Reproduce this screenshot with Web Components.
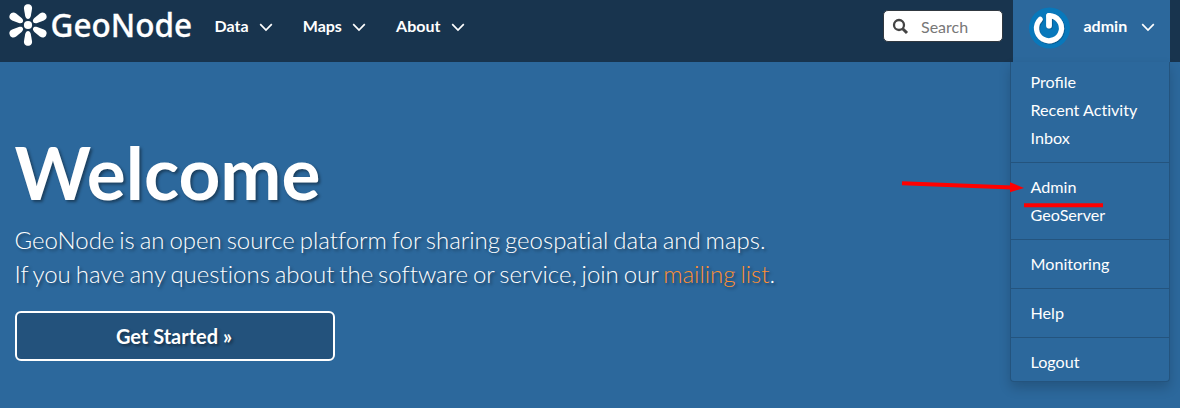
<!DOCTYPE html>
<html lang="en">
<head>
<meta charset="utf-8">
<title>GeoNode</title>
<style>
  html, body { margin: 0; height: 408px; overflow: hidden; }
  body { font-family: Lato, "Liberation Sans", sans-serif; font-size: 16px; color: #fff; background: #2c689c; position: relative; }
</style>
</head>
<body>
<geo-header>
  <geo-logo></geo-logo>
  <nav-item>Data</nav-item>
  <nav-item>Maps</nav-item>
  <nav-item>About</nav-item>
  <search-box slot="end"></search-box>
  <user-menu slot="end">
    <menu-group><menu-entry>Profile</menu-entry><menu-entry class="plain">Recent Activity</menu-entry><menu-entry>Inbox</menu-entry></menu-group>
    <menu-group><menu-entry>Admin</menu-entry><menu-entry>GeoServer</menu-entry></menu-group>
    <menu-group><menu-entry>Monitoring</menu-entry></menu-group>
    <menu-group><menu-entry>Help</menu-entry></menu-group>
    <menu-group><menu-entry>Logout</menu-entry></menu-group>
  </user-menu>
</geo-header>
<welcome-hero></welcome-hero>
<arrow-note></arrow-note>
<script>
const define = (name, html) => customElements.define(name, class extends HTMLElement {
  constructor() {
    super();
    const t = document.createElement('template');
    t.innerHTML = html;
    this.attachShadow({ mode: 'open' }).append(t.content.cloneNode(true));
  }
});
const chevron = '<svg width="14" height="9" viewBox="0 0 14 9"><path d="M1.2 1.2 7 7 12.8 1.2" fill="none" stroke="#fff" stroke-width="1.7"/></svg>';

define('geo-header', `
  <style>
    :host { display: flex; justify-content: space-between; height: 62px; background: #18344e; }
    .side { display: flex; align-items: flex-start; }
    .end { padding-right: 10px; }
  </style>
  <div class="side"><slot></slot></div>
  <div class="side end"><slot name="end"></slot></div>`);

define('geo-logo', `
  <style>:host { display: block; width: 199.5px; height: 50px; } svg { display: block; }
    text { font-family: "Noto Sans", "Open Sans", sans-serif; font-weight: 500; font-size: 33px; fill: #fff; stroke: #fff; stroke-width: .3px; }</style>
  <svg width="199" height="50" viewBox="0 0 199 50">
    <defs><path id="petal" d="M28 19C26.700 19 25.700 18 25.200 16L24 9C23.600 6 25.300 4.200 28 4.200S32.400 6 32 9L30.800 16C30.300 18 29.300 19 28 19Z"/></defs>
    <g fill="#fff">
      <circle cx="28" cy="25" r="4.100"/>
      <use href="#petal"/><use href="#petal" transform="rotate(60 28 25)"/><use href="#petal" transform="rotate(120 28 25)"/>
      <use href="#petal" transform="rotate(180 28 25)"/><use href="#petal" transform="rotate(240 28 25)"/><use href="#petal" transform="rotate(300 28 25)"/>
    </g>
    <text x="50.500" y="37" textLength="141.500" lengthAdjust="spacingAndGlyphs">GeoNode</text>
  </svg>`);

define('nav-item', `
  <style>:host { display: flex; align-items: center; gap: 10.200px; height: 51px; padding: 0 15px; font-weight: 700; }
  svg { display: block; margin-top: 3px; }</style>
  <slot></slot>${chevron}`);

define('search-box', `
  <style>:host { display: flex; align-items: center; box-sizing: border-box; width: 120px; height: 32px; margin: 10px 10px 0 0; padding-left: 8px; gap: 12px;
    background: #fff; border: 1px solid #303840; border-radius: 5px; color: #777; }
    svg { margin-top: 1px; }</style>
  <svg width="17" height="17" viewBox="0 0 17 17"><g fill="none" stroke="#444"><circle cx="7" cy="7" r="5" stroke-width="2.300"/><path d="M10.700 10.700 15 15" stroke-width="3"/></g></svg>
  <span>Search</span>`);

define('user-menu', `
  <style>
    :host { display: block; position: relative; width: 157px; }
    .toggle { display: flex; align-items: flex-start; box-sizing: border-box; height: 62px; padding: 7px 15px 0 16px; background: #2c689c; font-weight: 700; }
    .name { flex: 1; margin-left: 12.500px; line-height: 38px; }
    .toggle > svg { display: block; }
    .toggle > svg:last-child { margin-top: 15.500px; }
    .menu { position: absolute; top: 62px; right: 0; box-sizing: border-box; width: 160px; padding: 6px 0 5px; background: #2c689c;
      border: 1px solid #24547e; border-top: 0; border-radius: 0 0 4px 4px; box-shadow: 0 6px 12px rgba(0,0,0,.175); }
  </style>
  <div class="toggle">
    <svg width="42" height="42" viewBox="0 0 42 42">
      <defs><filter id="sh" x="-30%" y="-30%" width="160%" height="160%"><feDropShadow dx=".7" dy=".8" stdDeviation=".6" flood-color="#053a66" flood-opacity=".6"/></filter></defs>
      <circle cx="20.500" cy="21" r="20.500" fill="#0878bb"/>
      <g fill="none" stroke="#fff" stroke-linecap="round" filter="url(#sh)"><path d="M11.200 12.300A12.500 12.500 0 1 0 20 8.700" stroke-width="5.200"/><path d="M20 9V18.500" stroke-width="5.800"/></g>
    </svg>
    <span class="name">admin</span>${chevron}
  </div>
  <div class="menu"><slot></slot></div>`);

define('menu-group', `
  <style>:host { display: block; } :host(:not(:first-child)) { margin-top: 10px; border-top: 1px solid #24547e; padding-top: 10px; }</style><slot></slot>`);
define('menu-entry', `
  <style>:host { display: block; height: 28px; line-height: 28px; padding: 0 19.500px; font-size: 16.150px; white-space: nowrap; } :host(.plain) { font-variant-ligatures: none; }</style><slot></slot>`);

define('welcome-hero', `
  <style>
    :host { display: block; padding: 67px 15px 0; text-shadow: 2px 2px 3px rgba(0,0,0,.4); }
    h1 { margin: 0 0 0 -.5px; font-size: 73px; line-height: 86px; font-weight: 700; }
    p { margin: 8px 0 20px -.5px; font-size: 24px; line-height: 34px; font-weight: 300; white-space: nowrap; font-variant-ligatures: none; word-spacing: -1.620px; }
    a { color: #ff8f31; text-decoration: none; }
    .button { box-sizing: border-box; width: 320px; height: 50px; line-height: 47px; padding-right: 2px; border: 2px solid #fff; border-radius: 6px; background: #23527c; text-align: center; font-size: 20px; font-weight: 700; }
  </style>
  <h1>Welcome</h1>
  <p>GeoNode is an open source platform for sharing geospatial data and maps.<br>If you have any questions about the software or service, join our <a>mailing list</a>.</p>
  <div class="button">Get Started »</div>`);

define('arrow-note', `
  <style>:host { display: block; position: absolute; left: 895px; top: 175px; width: 215px; height: 40px; pointer-events: none; } svg { display: block; }</style>
  <svg width="215" height="40" viewBox="895 175 215 40"><path d="M902 183.200 1012 187.600" stroke="#f00" stroke-width="4"/><path d="M1010 182.200 1024 188 1010 192.200Z" fill="#f00"/><path d="M1024 205.200H1103" stroke="#f00" stroke-width="4"/></svg>`);
</script>
</body>
</html>
